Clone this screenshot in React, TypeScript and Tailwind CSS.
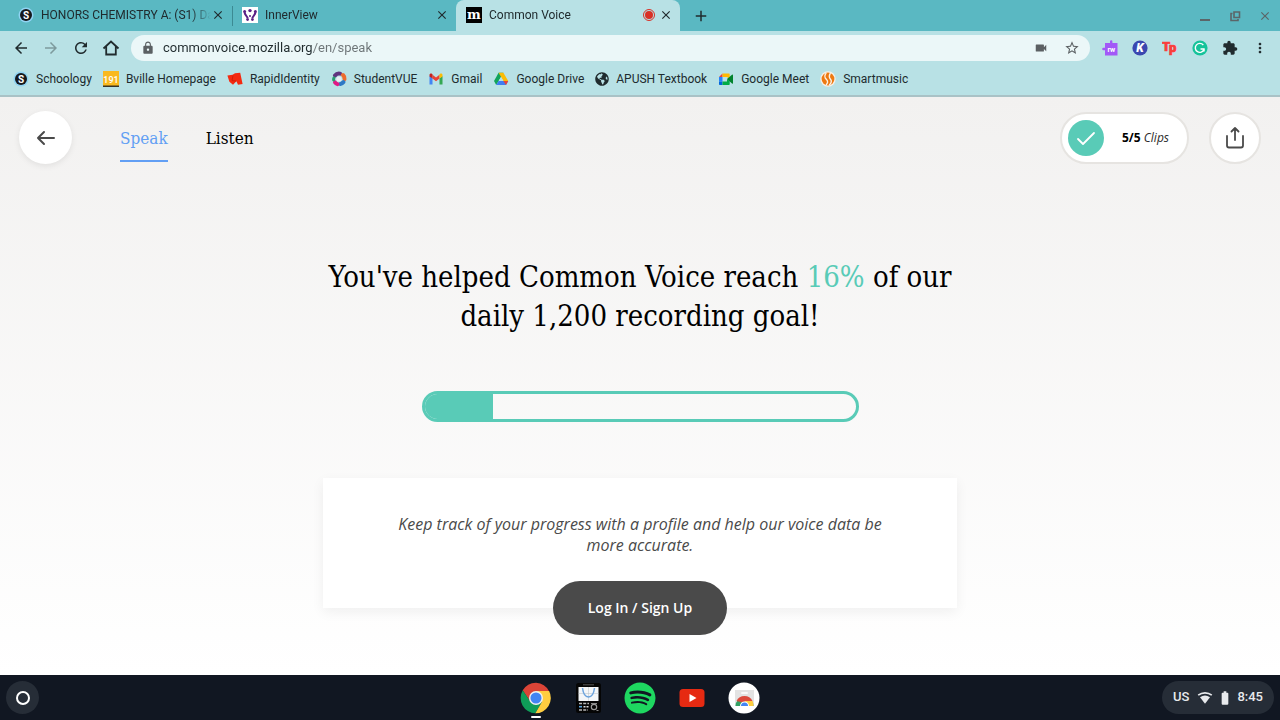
import { ReactNode, useState } from 'react';
import { FaSpotify, FaGlobeAmericas } from 'react-icons/fa';
import {
  MdAdd,
  MdArrowBack,
  MdArrowForward,
  MdBatteryFull,
  MdClose,
  MdExtension,
  MdLock,
  MdMoreVert,
  MdRefresh,
  MdStarBorder,
  MdVideocam,
} from 'react-icons/md';

/* ---------- Site icons ---------- */

function SchoologyIcon() {
  return (
    <svg viewBox="0 0 16 16" className="size-4 shrink-0">
      <circle cx="8" cy="8" r="7.5" fill="#8fd3f2" />
      <circle cx="8" cy="8" r="6" fill="#15181c" />
      <text x="8" y="11.6" textAnchor="middle" fontSize="10" fontWeight="700" fill="#fff">
        S
      </text>
    </svg>
  );
}

function InnerViewIcon() {
  return (
    <svg viewBox="0 0 16 16" className="size-4 shrink-0">
      <rect width="16" height="16" fill="#fff" />
      <g fill="#5a1f85">
        <circle cx="8" cy="3.6" r="1.7" />
        <circle cx="2.6" cy="4.6" r="1.5" />
        <circle cx="13.4" cy="4.6" r="1.5" />
        <circle cx="5.6" cy="12.6" r="1.4" />
        <circle cx="10.4" cy="12.6" r="1.4" />
        <circle cx="8" cy="9" r="1" />
      </g>
      <path d="M2.6 5.5C3 8.500 5 8.500 5.800 11.500M13.400 5.500C13 8.500 11 8.500 10.200 11.500" fill="none" stroke="#5a1f85" strokeWidth="2" />
    </svg>
  );
}

function MozillaIcon() {
  return (
    <svg viewBox="0 0 16 16" className="size-4 shrink-0">
      <rect width="16" height="16" fill="#000" />
      <text x="8" y="12" textAnchor="middle" fontSize="13" fontWeight="700" fill="#fff" fontFamily="DejaVu Serif, serif">
        m
      </text>
    </svg>
  );
}

function BvilleIcon() {
  return (
    <svg viewBox="0 0 16 16" className="size-4 shrink-0">
      <rect width="16" height="16" fill="#f9b91f" />
      <rect y="14.5" width="16" height="1.5" fill="#3a3427" />
      <text x="8" y="11.5" textAnchor="middle" fontSize="9" fontWeight="500" fill="#fff">
        191
      </text>
    </svg>
  );
}

function RapidIdentityIcon() {
  return (
    <svg viewBox="0 0 16 16" className="size-4 shrink-0">
      <path d="M.4 4.600l5.200-.9L8 2.300l5.200-.6L15.600 13l-4.600.8-1.600-3.600-3.400 3.600-3.600-3z" fill="#f42a10" />
      <path d="M6 4.500L5 9.500l4.200.6" fill="none" stroke="#c81c08" strokeWidth=".8" />
    </svg>
  );
}

function StudentVueIcon() {
  return (
    <svg viewBox="0 0 16 16" className="size-4 shrink-0" fill="none" strokeWidth="4" strokeLinecap="round">
      <path d="M4 4.500A5 5 0 0 1 9 2.600" stroke="#60347e" />
      <path d="M12 4a5 5 0 0 1 1.500 4" stroke="#ee6b2d" />
      <path d="M12.500 11a5 5 0 0 1-3.200 2" stroke="#2f79c4" />
      <path d="M6.500 13.200a5 5 0 0 1-2.500-1.800" stroke="#e01885" />
      <path d="M2.600 9a5 5 0 0 1 .3-2" stroke="#2a9d70" strokeWidth="3" />
      <circle cx="8" cy="8" r="2.600" fill="#e9eef2" />
    </svg>
  );
}

function GmailIcon() {
  return (
    <svg viewBox="0 0 16 16" className="size-4 shrink-0">
      <path d="M1.500 13.500h3V7.200L1.500 5z" fill="#4285f4" />
      <path d="M11.500 13.500h3V5l-3 2.200z" fill="#34a853" />
      <path d="M4.500 7.600V3.800L8 6.400l3.500-2.600v3.800L8 10.200z" fill="#ea4335" />
      <path d="M1.500 5.500V4c0-1.500 1.600-1.900 2.600-1.100l.4.300v4.400z" fill="#c5221f" />
      <path d="M14.500 5.500V4c0-1.500-1.600-1.900-2.600-1.100l-.4.300v4.400z" fill="#fbbc04" />
    </svg>
  );
}

function DriveIcon() {
  return (
    <svg viewBox="0 0 16 16" className="size-4 shrink-0">
      <path d="M5.600 1.800h4.800L8 5.900 3.200 14 1 10z" fill="#12a45b" />
      <path d="M10.400 1.800L15.200 10h-4.800L5.600 1.800z" fill="#fbbc04" />
      <path d="M3.200 14l2.300-4h9.700L13 14z" fill="#3f7df1" />
      <path d="M15.200 10L13 14l-2.600-4z" fill="#ea4335" />
      <path d="M8 5.900L10.400 10H5.600z" fill="#b8e1e5" />
    </svg>
  );
}

function MeetIcon() {
  return (
    <svg viewBox="0 0 16 16" className="size-4 shrink-0">
      <path d="M4.500 2.500V6H1z" fill="#ea4335" />
      <path d="M1 6h3.500v4.500H1z" fill="#2684fc" />
      <path d="M1 10.500h3.500V14H2c-.6 0-1-.4-1-1z" fill="#0066da" />
      <path d="M4.500 2.500h6.200c.6 0 1 .4 1 1V8L9 6H4.500z" fill="#ffba00" />
      <path d="M4.500 10.500H9V8l2.700 2v3c0 .6-.4 1-1 1H4.500z" fill="#00ac47" />
      <path d="M9 8l5-4.300c.5-.3 1 0 1 .5v8c0 .6-.6.700-1 .4z" fill="#00832d" />
    </svg>
  );
}

function SmartmusicIcon() {
  return (
    <svg viewBox="0 0 16 16" className="size-4 shrink-0">
      <circle cx="8" cy="8" r="7.700" fill="#f7f1e8" />
      <circle cx="8" cy="8" r="6.400" fill="#ee7a12" />
      <path d="M6.200 1.800C4 5 4.500 6.500 6.500 8.600S7.500 12 6 14M10.500 2C8.500 5 9 6.500 10.500 8.200s.8 3.800-1.300 6" fill="none" stroke="#fbf3e8" strokeWidth="1.400" />
    </svg>
  );
}

function HomeIcon() {
  return (
    <svg viewBox="0 0 18 18" className="size-[18px]" fill="none" stroke="currentColor" strokeWidth="1.800">
      <path d="M1.500 9.500L9 2.500l7.500 7M4.200 7.500v8h9.600v-8" />
    </svg>
  );
}

/* ---------- Extension icons ---------- */

function ReadWriteIcon() {
  return (
    <svg viewBox="0 0 16 16" className="size-4">
      <path d="M3 3h5V1.500a1.200 1.200 0 0 1 2.400 0V3H15.500v12.500H3V10.300H1.500a1.300 1.300 0 0 1 0-2.600H3z" fill="#a259f7" />
      <text x="9.300" y="11.800" textAnchor="middle" fontSize="7" fontWeight="700" fill="#fff">
        rw
      </text>
    </svg>
  );
}

function KamiIcon() {
  return (
    <svg viewBox="0 0 16 16" className="size-4">
      <circle cx="8" cy="8" r="7.600" fill="#3b48b0" />
      <text x="8" y="12.200" textAnchor="middle" fontSize="12" fontWeight="900" fontStyle="italic" fill="#fff">
        K
      </text>
    </svg>
  );
}

function TpIcon() {
  return (
    <svg viewBox="0 0 16 16" className="size-4" fill="#fa3e3b" stroke="#fa3e3b" strokeWidth=".7" fontWeight="900">
      <text x="0" y="11" fontSize="13">T</text>
      <text x="7" y="12" fontSize="13">p</text>
    </svg>
  );
}

function GrammarlyIcon() {
  return (
    <svg viewBox="0 0 16 16" className="size-4">
      <circle cx="8" cy="8" r="7.600" fill="#15c39a" />
      <path d="M11.300 5A4.500 4.500 0 1 0 12 9.500" fill="none" stroke="#fff" strokeWidth="1.400" />
      <path d="M8.500 9H12v2.500" fill="none" stroke="#fff" strokeWidth="1.400" />
    </svg>
  );
}

/* ---------- Shelf icons ---------- */

function ChromeLogo() {
  return (
    <svg viewBox="0 0 48 48" className="size-8">
      <path d="M24 1A23 23 0 0 0 4.080 12.500L15 29.200 24 14h19.600A23 23 0 0 0 24 1z" fill="#db4437" />
      <path d="M4.080 12.500A23 23 0 0 0 23 47l10-17.500-17.700-.5z" fill="#0f9d58" />
      <path d="M43.700 13.500H24l9 16L23 47A23 23 0 0 0 43.700 13.500z" fill="#ffcd40" />
      <circle cx="24" cy="24" r="10.500" fill="#f1f1f1" />
      <circle cx="24" cy="24" r="8.300" fill="#4285f4" />
    </svg>
  );
}

function CalculatorIcon() {
  return (
    <svg viewBox="0 0 32 32" className="size-8">
      <rect x="4" y="1" width="25" height="30" rx="2.500" fill="#050505" />
      <rect x="11" y="2.300" width="11" height="1" fill="#555" />
      <rect x="6.500" y="5" width="20" height="14" fill="#f4f6f8" />
      <path d="M6.500 11.500h20M16.500 5v14" stroke="#b9c0c6" strokeWidth=".5" />
      <path d="M10.500 6c1.500 12 10.500 12 12 0" fill="none" stroke="#6ba2dc" strokeWidth="1.500" />
      <path d="M7 21.500h10M7 28h9" stroke="#b5b5b5" strokeWidth="1.400" strokeDasharray="3 1.200" />
      <path d="M7 24.700h3" stroke="#57a3df" strokeWidth="1.600" />
      <path d="M11.500 24.700h5" stroke="#ddd" strokeWidth="1.400" strokeDasharray="2 1" />
      <circle cx="22" cy="25" r="2.700" fill="none" stroke="#999" strokeWidth="1.200" />
      <path d="M19 21.500h6M24.500 28.500h2" stroke="#888" />
    </svg>
  );
}

function YoutubeIcon() {
  return (
    <svg viewBox="0 0 32 32" className="size-8">
      <rect x="3.500" y="7" width="25" height="18" rx="3.500" fill="#e62a12" />
      <path d="M13.500 12v8l7-4z" fill="#fff" />
    </svg>
  );
}

function WebStoreIcon() {
  return (
    <svg viewBox="0 0 32 32" className="size-8">
      <circle cx="16" cy="16" r="15.500" fill="#fff" />
      <path d="M7 8h19v16H7z" fill="#e3e3e3" />
      <rect x="13" y="10" width="7" height="2" rx="1" fill="#fafafa" />
      <path d="M7.500 24a9 9 0 0 1 18 0z" fill="#34a165" />
      <path d="M8.500 19a9 9 0 0 1 16 0l-8 2z" fill="#dc4a3d" />
      <path d="M16.500 19h8a9 9 0 0 1 1 5h-6z" fill="#ffcd40" />
      <path d="M12 24a4.500 4.500 0 0 1 9 0z" fill="#fff" />
      <path d="M13 24a3.500 3.500 0 0 1 7 0z" fill="#4285f4" />
    </svg>
  );
}

function WifiIcon() {
  return (
    <svg viewBox="0 0 16 14" className="h-3.5 w-4">
      <path d="M1.200 4.200a11 11 0 0 1 13.600 0" fill="none" stroke="#e8eaed" strokeWidth="1.600" />
      <path d="M3 6.300a8.200 8.200 0 0 1 10 0L8 12.800z" fill="#e8eaed" />
    </svg>
  );
}

/* ---------- Browser frame ---------- */

interface TabProps {
  icon: ReactNode;
  title: string;
  active?: boolean;
  recording?: boolean;
}

function Tab({ icon, title, active, recording }: TabProps) {
  return (
    <div
      className={
        active
          ? 'flex h-full min-w-0 max-w-[224px] flex-1 items-center gap-[7px] rounded-t-lg bg-[#b8e1e5] px-2.5 pb-px'
          : 'flex h-full min-w-0 max-w-[224px] flex-1 items-center gap-[7px] px-2.5 pb-px'
      }
    >
      {icon}
      <span className="min-w-0 flex-1 overflow-hidden whitespace-nowrap mask-r-from-[calc(100%-20px)] mask-r-to-100%">
        {title}
      </span>
      {recording && (
        <span className="mr-1 flex size-3 items-center justify-center rounded-full border border-[#d93025]">
          <span className="size-2 rounded-full bg-[#d93025]" />
        </span>
      )}
      <button aria-label={`Close ${title}`} className="-mr-1 -ml-2 flex size-4 shrink-0 items-center justify-center">
        <MdClose className="size-3.5" />
      </button>
    </div>
  );
}

const BOOKMARKS = [
  { label: 'Schoology', icon: <SchoologyIcon /> },
  { label: 'Bville Homepage', icon: <BvilleIcon /> },
  { label: 'RapidIdentity', icon: <RapidIdentityIcon /> },
  { label: 'StudentVUE', icon: <StudentVueIcon /> },
  { label: 'Gmail', icon: <GmailIcon /> },
  { label: 'Google Drive', icon: <DriveIcon /> },
  { label: 'APUSH Textbook', icon: <FaGlobeAmericas className="size-3.5 shrink-0" /> },
  { label: 'Google Meet', icon: <MeetIcon /> },
  { label: 'Smartmusic', icon: <SmartmusicIcon /> },
];

const EXTENSIONS = [
  { label: 'Read&Write', icon: <ReadWriteIcon /> },
  { label: 'Kami', icon: <KamiIcon /> },
  { label: 'Tp', icon: <TpIcon /> },
  { label: 'Grammarly', icon: <GrammarlyIcon /> },
  { label: 'Extensions', icon: <MdExtension className="size-4" /> },
  { label: 'Menu', icon: <MdMoreVert className="size-[18px]" /> },
];

function BrowserFrame() {
  const [url, setUrl] = useState('commonvoice.mozilla.org/en/speak');

  return (
    <div className="border-b-2 border-[#a9c2c6] bg-[#b8e1e5] text-xs text-[#202b2e]">
      {/* Tab strip */}
      <div className="flex h-[31px] items-center bg-[#5ab8c2] pl-2">
        <Tab icon={<SchoologyIcon />} title="HONORS CHEMISTRY A: (S1) Davis" />
        <span className="-mr-px h-5 w-px bg-[#3c8a93]" />
        <Tab icon={<InnerViewIcon />} title="InnerView" />
        <Tab icon={<MozillaIcon />} title="Common Voice" active recording />
        <button aria-label="New tab" className="ml-3">
          <MdAdd className="size-[18px]" />
        </button>
        <div className="ml-auto flex text-[#5b6568]">
          <button aria-label="Minimize" className="flex h-[31px] w-[30px] items-center justify-center">
            <svg viewBox="0 0 12 12" className="size-3">
              <path d="M1 10h10" stroke="currentColor" strokeWidth="2" />
            </svg>
          </button>
          <button aria-label="Restore" className="flex h-[31px] w-[30px] items-center justify-center">
            <svg viewBox="0 0 12 12" className="size-3" fill="none" stroke="currentColor" strokeWidth="1.600">
              <path d="M5 2h5.500v5.500H5zM3.500 3.500H2v7h7V9" />
            </svg>
          </button>
          <button aria-label="Close window" className="flex h-[31px] w-[30px] items-center justify-center">
            <MdClose className="size-3.5" />
          </button>
        </div>
      </div>

      {/* Toolbar */}
      <div className="flex h-[33px] items-center px-3">
        <div className="flex gap-3">
          <button aria-label="Back"><MdArrowBack className="size-[18px]" /></button>
          <button aria-label="Forward" disabled className="text-[#7d9a9d]"><MdArrowForward className="size-[18px]" /></button>
          <button aria-label="Reload"><MdRefresh className="size-[18px]" /></button>
          <button aria-label="Home"><HomeIcon /></button>
        </div>
        <div className="mr-3 ml-[11px] flex h-[26px] flex-1 items-center rounded-full bg-[#ebf7f8] px-[10px] text-[#5b6063]">
          <MdLock className="size-3.5" />
          {/* host is drawn dark, path in grey */}
          <input
            aria-label="Address"
            value={url}
            onChange={(e) => setUrl(e.target.value)}
            className="ml-2 min-w-0 flex-1 bg-[linear-gradient(to_right,#202b2e_150px,#6d7477_150px)] bg-clip-text text-[13px] text-transparent outline-none"
          />
          <div className="flex gap-4">
            <button aria-label="Camera"><MdVideocam className="size-3.5" /></button>
            <button aria-label="Bookmark this page"><MdStarBorder className="size-4" /></button>
          </div>
        </div>
        <div className="flex items-center gap-[14px]">
          {EXTENSIONS.map((ext) => (
            <button key={ext.label} aria-label={ext.label} className="flex size-4 items-center justify-center">
              {ext.icon}
            </button>
          ))}
        </div>
      </div>

      {/* Bookmarks bar */}
      <nav className="flex h-[31px] items-center gap-[11px] px-[13px] pb-[2px]">
        {BOOKMARKS.map((b) => (
          <a key={b.label} href="#" className="flex items-center gap-[7px] whitespace-nowrap">
            {b.icon}
            {b.label}
          </a>
        ))}
      </nav>
    </div>
  );
}

/* ---------- Common Voice page ---------- */

function SpeakHeader() {
  return (
    <header className="flex items-center justify-between px-[19px] pt-[14px]">
      <div className="flex items-center">
        <button
          aria-label="Back"
          className="flex size-[53px] items-center justify-center rounded-full bg-white text-[#4a4a4a] shadow-[0_2px_6px_rgba(0,0,0,0.08)]"
        >
          <svg viewBox="0 0 20 20" className="size-5" fill="none" stroke="currentColor" strokeWidth="2" strokeLinecap="round" strokeLinejoin="round">
            <path d="M18 10H2M8 4l-6 6 6 6" />
          </svg>
        </button>
        <nav className="ml-12 flex gap-[38px] font-['DejaVu_Serif_Condensed','DejaVu_Serif',serif] text-[17px] leading-6">
          <a href="#" className="border-b-2 border-[#629ff4] pt-3 pb-2.5 text-[#629ff4]">Speak</a>
          <a href="#" className="pt-3 pb-2.5 text-black">Listen</a>
        </nav>
      </div>
      <div className="flex items-center gap-5">
        <div className="flex h-[52px] items-center gap-[18px] rounded-full border-2 border-[#e6e4e1] bg-white pr-[18px] pl-1.5 text-xs">
          <span className="flex size-9 items-center justify-center rounded-full bg-[#59cbb7]">
            <svg viewBox="0 0 20 20" className="size-5" fill="none" stroke="#fff" strokeWidth="1.800" strokeLinecap="round" strokeLinejoin="round">
              <path d="M2 11l5 5L18 5" />
            </svg>
          </span>
          <span className="text-black">
            <b>5/5</b> <i className="text-[#2b2b2b]">Clips</i>
          </span>
        </div>
        <button
          aria-label="Share"
          className="flex size-[52px] items-center justify-center rounded-full border-2 border-[#e6e4e1] bg-white text-[#4a4a4a]"
        >
          <svg viewBox="0 0 20 22" className="h-[22px] w-5" fill="none" stroke="currentColor" strokeWidth="1.800" strokeLinecap="round" strokeLinejoin="round">
            <path d="M10 13V1M6.500 4.500L10 1l3.500 3.500M2 9v9.500A2 2 0 0 0 4 20.500h12a2 2 0 0 0 2-2V9" />
          </svg>
        </button>
      </div>
    </header>
  );
}

function GoalBar({ percent }: { percent: number }) {
  return (
    <div
      role="progressbar"
      aria-label="Daily goal"
      aria-valuenow={percent}
      className="mx-auto mt-[55px] h-[31px] w-full max-w-[437px] overflow-hidden rounded-full border-3 border-[#59cbb7]"
    >
      <div className="h-full bg-[#59cbb7]" style={{ width: `${percent}%` }} />
    </div>
  );
}

function SpeakPage() {
  return (
    <main className="flex-1 bg-linear-to-b from-[#f2f1f0] to-white font-['Open_Sans',sans-serif]">
      <SpeakHeader />
      <section className="mx-auto mt-[94px] w-full max-w-[634px] pb-10 text-center">
        <h1 className="font-['DejaVu_Serif_Condensed','DejaVu_Serif',serif] text-[29px] leading-[39px] text-black">
          You've helped Common Voice reach <span className="text-[#59cbb7]">16%</span> of our daily 1,200 recording goal!
        </h1>
        <GoalBar percent={16} />
        <div className="mt-14 bg-white px-[70px] pt-9 pb-[52px] shadow-[0_4px_12px_rgba(0,0,0,0.06)]">
          <p className="text-base leading-[21px] text-[#4a4a4a] italic">
            Keep track of your progress with a profile and help our voice data be more accurate.
          </p>
        </div>
        {/* Button straddles the card's bottom edge */}
        <button className="relative mx-auto -mt-[27px] block h-[54px] rounded-full bg-[#4a4a4a] px-[35px] text-sm font-semibold text-white">
          Log In / Sign Up
        </button>
      </section>
    </main>
  );
}

/* ---------- Shelf ---------- */

function Shelf() {
  return (
    <footer className="grid h-[45px] grid-cols-[1fr_auto_1fr] items-center bg-[#111722] px-1.5 text-sm text-[#e8eaed]">
      <button aria-label="Launcher" className="flex size-[33px] items-center justify-center rounded-full bg-[#262d37]">
        <span className="size-3.5 rounded-full border-2 border-white" />
      </button>
      <div className="flex h-full items-center gap-5">
        <button aria-label="Chrome" className="relative">
          <ChromeLogo />
          <span className="absolute -bottom-1 left-1/2 h-0.5 w-2.5 -translate-x-1/2 rounded-full bg-white" />
        </button>
        <button aria-label="Calculator"><CalculatorIcon /></button>
        <button aria-label="Spotify"><FaSpotify className="size-8 text-[#1ed760]" /></button>
        <button aria-label="YouTube"><YoutubeIcon /></button>
        <button aria-label="Web Store"><WebStoreIcon /></button>
      </div>
      <button className="flex h-[33px] items-center gap-2 justify-self-end rounded-full bg-[#262d37] px-[11px] text-[13px] font-medium">
        US
        <WifiIcon />
        <MdBatteryFull className="-mx-1 size-4" />
        8:45
      </button>
    </footer>
  );
}

export default function App() {
  return (
    <div className="flex min-h-screen flex-col font-[Roboto,sans-serif]">
      <BrowserFrame />
      <SpeakPage />
      <Shelf />
    </div>
  );
}
